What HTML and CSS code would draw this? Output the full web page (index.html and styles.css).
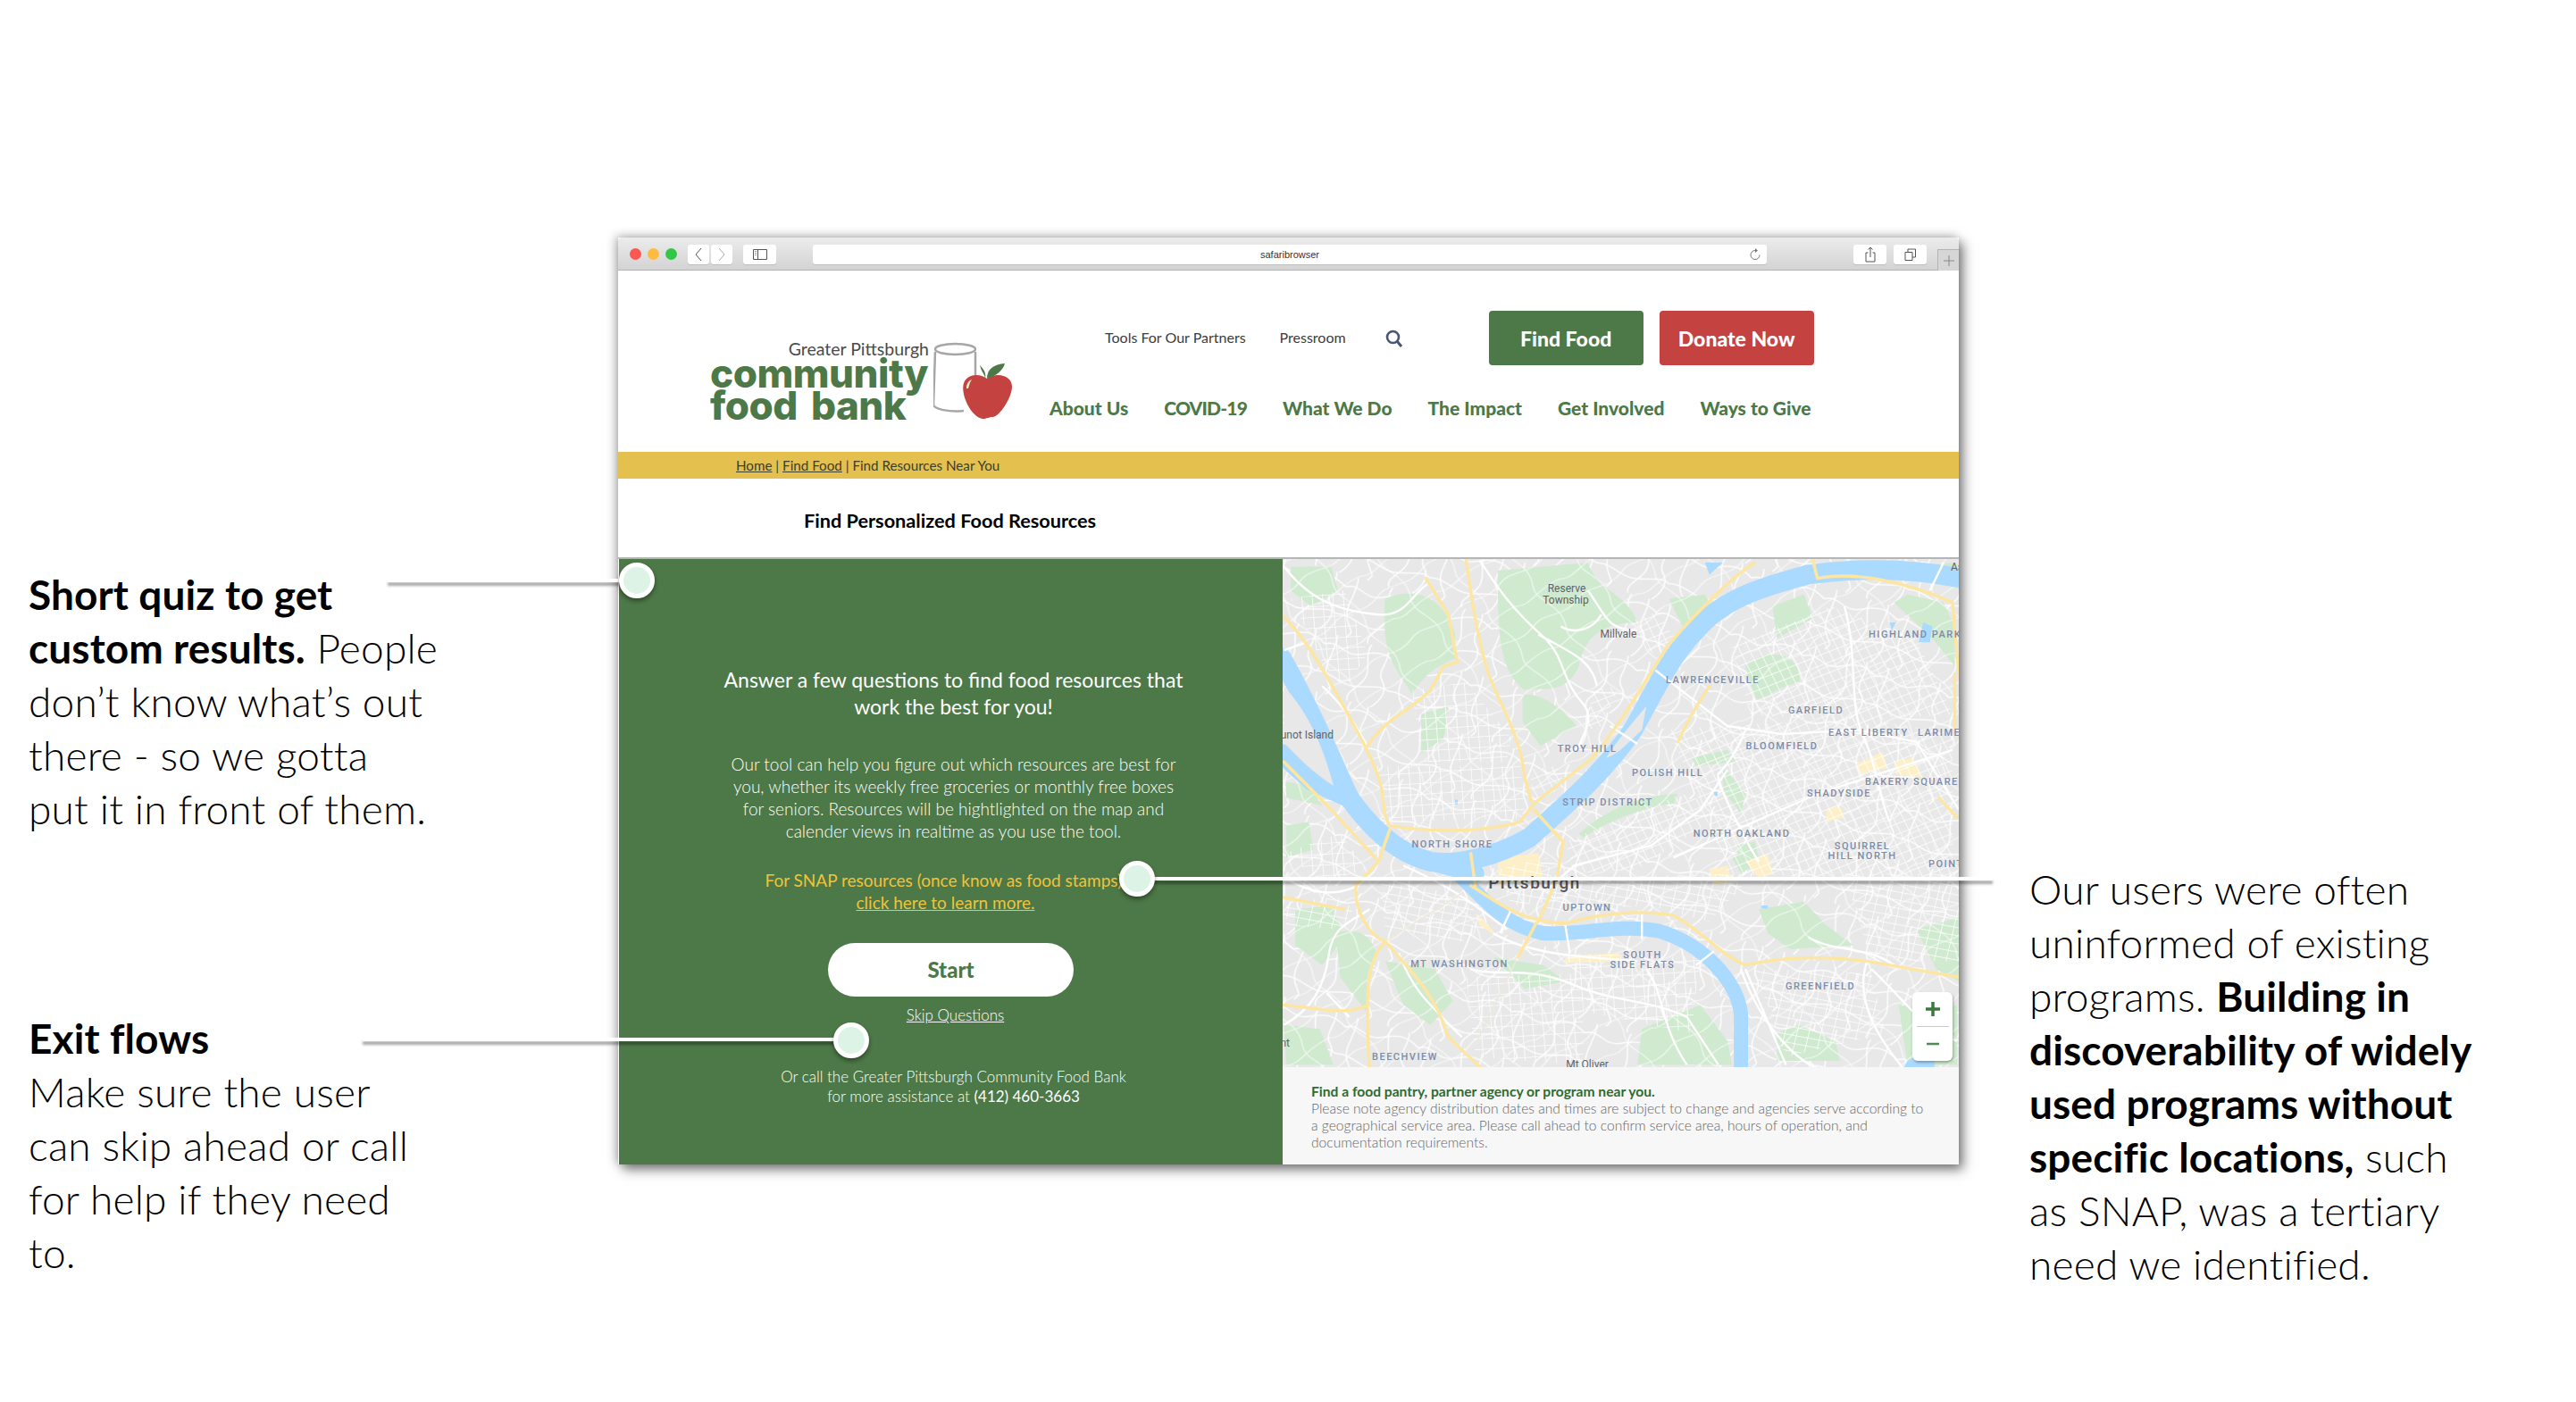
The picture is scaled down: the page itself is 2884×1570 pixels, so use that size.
FILE: index.html
```html
<!DOCTYPE html>
<html>
<head>
    <title>Find Personalized Food Resources</title>
    <link rel="stylesheet" href="styles.css">
</head>
<body>
<div class="slide">
    <div class="notes-left">
        <p class="note note-quiz"><b>Short quiz to get<br>custom results.</b> People<br>don’t know what’s out<br>there - so we gotta<br>put it in front of them.</p>
        <p class="note note-exit"><b>Exit flows</b><br>Make sure the user<br>can skip ahead or call<br>for help if they need<br>to.</p>
    </div>

    <div class="window">
        <div class="toolbar">
            <div class="lights"><i class="red"></i><i class="amber"></i><i class="green"></i></div>
            <div class="tool-btn tool-nav"><svg width="10" height="16" viewBox="0 0 10 16"><path d="M8 1 2 8l6 7" fill="none" stroke="#555" stroke-width="1"/></svg></div>
            <div class="tool-btn tool-nav"><svg width="10" height="16" viewBox="0 0 10 16"><path d="m2 1 6 7-6 7" fill="none" stroke="#aaa" stroke-width="1"/></svg></div>
            <div class="tool-btn tool-side"><svg width="16" height="12" viewBox="0 0 16 12"><path d="M.5.5h15v11H.5zM5.5.5v11" fill="none" stroke="#555"/><path d="M2 2.500h2M2 4.500h2M2 6.500h2" stroke="#999"/></svg></div>
            <div class="address">
                <span>safaribrowser</span>
                <svg class="reload" width="13" height="14" viewBox="0 0 13 14"><path d="M6 2.500a5 5 0 1 0 5 5" fill="none" stroke="#777"/><path d="M6 0v5l3-2.500z" fill="#777"/></svg>
            </div>
            <div class="tool-btn tool-act"><svg width="12" height="18" viewBox="0 0 12 18"><path d="M3.500 7H1v10h10V7H8.500M6 12V1M3.500 3.500 6 1l2.500 2.500" fill="none" stroke="#555"/></svg></div>
            <div class="tool-btn tool-act"><svg width="14" height="14" viewBox="0 0 14 14"><path d="M1 4.500h8v9H1zM4 4.500V1h8.500v9H9" fill="none" stroke="#555"/></svg></div>
            <div class="new-tab"><svg width="12" height="12" viewBox="0 0 12 12"><path d="M6 0v12M0 6h12" stroke="#888"/></svg></div>
        </div>

        <header class="site-header">
            <div class="logo">
                <div class="logo-words">
                    <div class="logo-greater">Greater Pittsburgh</div>
                    <div class="logo-name">community</div>
                    <div class="logo-name">food bank</div>
                </div>
                <svg class="logo-art" width="90" height="89" viewBox="0 0 90 89">
                    <path d="M2 11 0 70c0 5 18 9 34 7M47 11v32" fill="none" stroke="#a6a6a6" stroke-width="2.500"/>
                    <ellipse cx="24.500" cy="8" rx="22.500" ry="6" fill="#fff" stroke="#a6a6a6" stroke-width="2.500"/>
                    <path d="M60 41C52 35 38 35 34 46c-4 12 8 38 21 40 5 0 7-2 11-2 8 0 22-22 22-34C88 38 72 33 60 41z" fill="#c44240"/>
                    <path d="M37 52c0-6 3-9 6-10-2 3-3 6-4 10z" fill="#eec"/>
                    <path d="M52 26c2 8 6 11 6 15 1-5 0-9-6-15zM60 41c0-11 8-16 20-17-2 8-10 14-20 17z" fill="#4d7847"/>
                </svg>
            </div>
            <div class="header-right">
                <div class="util-row">
                    <a class="util-link">Tools For Our Partners</a>
                    <a class="util-link">Pressroom</a>
                    <svg class="search" width="20" height="20" viewBox="0 0 20 20"><circle cx="8.500" cy="8.500" r="6.500" fill="none" stroke="#4a5570" stroke-width="2.600"/><path d="m13 13 5 6" stroke="#4a5570" stroke-width="3"/></svg>
                    <a class="cta cta-green">Find Food</a>
                    <a class="cta cta-red">Donate Now</a>
                </div>
                <nav class="main-nav">
                    <a>About Us</a>
                    <a class="nav-caps">COVID-19</a>
                    <a>What We Do</a>
                    <a>The Impact</a>
                    <a>Get Involved</a>
                    <a>Ways to Give</a>
                </nav>
            </div>
        </header>

        <div class="crumbs"><a>Home</a> | <a>Find Food</a> | Find Resources Near You</div>
        <h1 class="page-title">Find Personalized Food Resources</h1>

        <div class="finder">
            <section class="quiz">
                <h2>Answer a few questions to find food resources that<br>work the best for you!</h2>
                <p class="quiz-text">Our tool can help you figure out which resources are best for<br>you, whether its weekly free groceries or monthly free boxes<br>for seniors. Resources will be hightlighted on the map and<br>calender views in realtime as you use the tool.</p>
                <p class="quiz-snap">For SNAP resources (once know as food stamps),<br><a>click here to learn more.</a></p>
                <a class="start">Start</a>
                <a class="skip">Skip Questions</a>
                <p class="quiz-call">Or call the Greater Pittsburgh Community Food Bank<br>for more assistance at <span>(412) 460-3663</span></p>
            </section>

            <section class="map-side">
                <div class="map">
                    <svg class="map-art" width="757" height="570" viewBox="12 11 1502 1277" preserveAspectRatio="none">
                        <defs>
                            <pattern id="grid-a" width="23" height="27" patternUnits="userSpaceOnUse" patternTransform="rotate(-4)"><path d="M0 0H23M0 0V27" stroke="#fff" stroke-width="3" fill="none"/></pattern>
                            <pattern id="grid-b" width="20" height="24" patternUnits="userSpaceOnUse" patternTransform="rotate(-24)"><path d="M0 0H20M0 0V24" stroke="#fff" stroke-width="3" fill="none"/></pattern>
                            <pattern id="grid-c" width="26" height="20" patternUnits="userSpaceOnUse" patternTransform="rotate(12)"><path d="M0 0H26M0 0V20" stroke="#fff" stroke-width="3" fill="none"/></pattern>
                            <pattern id="lanes" width="170" height="150" patternUnits="userSpaceOnUse" patternTransform="rotate(18)"><path d="M0 30C30 10 50 50 85 30s55-20 85 0M20 0c10 40-10 80 10 110s20 20 10 40M100 0c-10 30 20 60 10 90s-30 40-20 60M0 100c40-10 60 20 100 10s50-20 70-10M140 0c10 30-10 60 10 80s10 50-5 70" stroke="#fff" stroke-width="2.800" fill="none"/></pattern>
                            <pattern id="lanes-b" width="120" height="130" patternUnits="userSpaceOnUse" patternTransform="rotate(-35)"><path d="M0 20c30 20 60-10 120 0M60 0c-20 40 30 70 0 130M0 85c40-20 70 20 120 0" stroke="#fff" stroke-width="2.400" fill="none"/></pattern>
                        </defs>
                        <rect x="0" y="0" width="1600" height="1400" fill="#e8e8e8"/>
                        <rect x="0" y="0" width="1600" height="1400" fill="url(#lanes)"/>

                        <g fill="#cfeacf">
                            <path d="M30 30h90l15 60-60 40-45-40zM20 340l60 60 30 70-95-40z"/>
                            <path d="M240 110C300 80 370 100 395 200v60c-40 20-70 40-95 90-40-70-70-100-60-240z"/>
                            <path d="M490 40l200-20c20 70 90 80 110 150-90 0-120 50-130 110-30 80-100 50-120 60-60-50-60-150-60-300z"/>
                            <path d="M545 350c50 0 90 40 120 80l-80 50-40-60z"/>
                            <path d="M320 400l60-20-10 80-50 40zM870 110l80-10 20 40-70 40z"/>
                            <path d="M1040 280c60-60 130-20 120 40-50 10-80 50-100 40zM1100 130l70-30 20 60-80 50z"/>
                            <path d="M1370 120l30-20 80 20 25 60v100l-50-70zM1400 30l110-10v30z" />
                            <path d="M670 700c60-60 140-100 220-100l-10 25c-80 10-150 50-200 85z"/>
                            <path d="M920 510l80-20 20 30-90 10zM990 530l50 70-10 50-40-60zM1010 760l50-40 10 50-40 30z"/>
                            <path d="M20 680l50-10 10 70-60 20zM20 570l50 10 30 50-80-20zM15 1180l80 10 30 90H20z"/>
                            <path d="M40 890l80-10 30 80-50 70-60-50zM130 950c50-20 80 10 90 50-30 60-20 90-20 150l-60-90z"/>
                            <path d="M240 1020l110 20 40 80-50 60-60-50zM480 1010l110 20 50 40-90 20z"/>
                            <path d="M810 1190l130-60 60 90 10 60H800zM1110 1200l50-20 80 40 10 50h-140z"/>
                            <path d="M1070 890l100-20 50 60 60 50-140 10-50-40z"/>
                            <path d="M1420 940l94-30v160l-50-30zM1380 1130l70 10 60-10v150h-110z"/>
                            <path d="M1020 730l40-10 10 40-40 30z"/>
                        </g>

                        <rect x="0" y="0" width="1600" height="1400" fill="url(#lanes-b)" opacity="0.7"/>

                        <g fill="#fdf0c8">
                            <path d="M490 760l90-10 10 60-100 20zM1040 770l50-20 10 50-30 10zM960 790l40-10 10 40-40 10z"/>
                            <path d="M1285 525l60-30 10 40-60 15zM1370 520l40-10 25 50-60-10zM1220 640l30-10 10 30-40 10zM640 1005l120-5v20l-120 5zM440 900l30 30 20 30-40-30z"/>
                        </g>

                        <!-- rivers -->
                        <g fill="none" stroke="#aadaff" stroke-linecap="round" stroke-linejoin="round">
                            <path d="M1530 62C1400 30 1280 35 1180 50 1080 80 990 110 930 190 870 260 840 340 790 440 730 540 650 620 560 710 480 760 400 780 340 770 270 750 210 690 160 610 130 540 90 420 10 260" stroke-width="22" vector-effect="non-scaling-stroke"/>
                            <path d="M10 500 80 570 160 610" stroke-width="22" vector-effect="non-scaling-stroke"/>
                            <path d="M410 810C470 880 510 930 590 950 680 955 760 925 850 945 950 980 1020 1070 1030 1150L1030 1300" stroke-width="16" vector-effect="non-scaling-stroke"/>
                            <path d="M340 770 440 800" stroke-width="20" vector-effect="non-scaling-stroke"/>
                        </g>
                        <path d="M730 510c30-50 60-90 90-130l-10 60c-30 30-50 60-80 70z" fill="#e8e8e8"/>
                        <path d="M15 330c40 50 80 120 110 250-40-30-80-70-110-110z" fill="#e8e8e8"/>
                        <path d="M950 20h40l-30 30zM1400 1270l60-40v60h-70z" fill="#aadaff"/>
                        <path d="M1435 170l20 10-5 40h-25zM1360 170h15l-10 20zM970 595h8v10h-8zM1075 880h15v8h-15zM395 615h6v12h-6z" fill="#aadaff"/>

                        <!-- street grids -->
                        <g>
                            <path fill="url(#grid-a)" d="M215 530h325l10 130-300 10zM30 110l120-20 50 160-50 90-50-70zM300 340l120-20 100 140-10 60H320z"/>
                            <path fill="url(#grid-a)" d="M15 750l125-50 60 90-100 30zM420 1060l260-10v230l-240-20zM640 1000l300 10-20 190-220-50z"/>
                            <path fill="url(#grid-b)" d="M640 720l260-120 100 40-200 150-140 10zM1000 430l300-20 200 40v370l-500-20-50-150-80-210zM780 170l70-30 30 70-50 40z"/>
                            <path fill="url(#grid-b)" d="M1010 230l220-100 190 80 80 190-250 20-200-20zM700 340l60-10-40 100-30 10zM560 540l60-10 20 50-70 40z"/>
                            <path fill="url(#grid-c)" d="M600 810l460-10-100 120-140-40-220 20zM1060 1040l260 10 30 150-220 60zM1260 800h254v220h-194zM490 790l110-30 20 110-100 10z"/>
                            <path fill="url(#grid-c)" d="M20 870l120-10 30 30-30 50-120-10zM230 820l170 30 70 80-60 40-170-30z"/>
                        </g>

                        <!-- main roads -->
                        <g fill="none" stroke="#fff" stroke-width="2.400" stroke-linejoin="round">
                            <path vector-effect="non-scaling-stroke" d="M15 30C70 110 130 140 220 150c70 10 80-60 120-80M15 240l50-20M100 330c60 60 90 130 100 150"/>
                            <path vector-effect="non-scaling-stroke" d="M450 15c30 50 60 110 140 190 50 50 40 110 90 170 30 40-10 90-10 110M580 200c60 40 120 60 130 130M720 150c-20 40-60 50-90 30M690 90c40 60 40 100 110 100"/>
                            <path vector-effect="non-scaling-stroke" d="M840 290l160 140 120 20 170-10 130 30 94 170M1000 540l-60 100-110 90-170 50-60 60"/>
                            <path vector-effect="non-scaling-stroke" d="M740 430l60 45M1450 90l30-70M970 995l-40 35M810 900v65M640 930l10 70M520 890l-25 60M1030 1040c50 160 140 240 170 248M1310 1020c-30 100 30 200 80 268"/>
                            <path vector-effect="non-scaling-stroke" d="M880 760l320-160 300-110M1040 440c-20 60-50 100-60 110s60 170 90 220M1260 130c30 120 10 250 40 320s40 170 60 220"/>
                            <path vector-effect="non-scaling-stroke" d="M15 1180c60-40 90-90 100-180 10-70 50-80 90-110M110 1100l50 60M430 1040c60 20 130-10 230 40 80 40 180 40 250 80l70 120M270 1000c30 90 60 120 140 210M480 950c90 60 230 60 320 70M1040 1040l90 240M1180 960c60 40 130 20 190 70"/>
                            <path vector-effect="non-scaling-stroke" d="M280 780c100 50 150 90 230 160M15 810c60 40 110 50 165 20M1320 1040c60 60 120 160 190 180M820 1040c40 60 30 140 90 240"/>
                        </g>

                        <!-- highways -->
                        <g fill="none" stroke="#fde6a2" stroke-width="3.500" stroke-linejoin="round" stroke-linecap="round">
                            <path vector-effect="non-scaling-stroke" d="M420 15c10 85 25 205 50 285s70 150 80 260l15 60"/>
                            <path vector-effect="non-scaling-stroke" d="M15 155c55 65 105 165 175 315s30 150 60 210c80 15 200 20 290-10l30-45"/>
                            <path vector-effect="non-scaling-stroke" d="M570 625l130-115c80-110 130-220 170-285 80-105 150-175 190-205"/>
                            <path vector-effect="non-scaling-stroke" d="M1190 15l10 45c80-20 200 10 300 60l14 180M1505 300v140M1470 610l40 50"/>
                            <path vector-effect="non-scaling-stroke" d="M570 640l65 80-15 100-40 100"/>
                            <path vector-effect="non-scaling-stroke" d="M430 830c70 50 110 90 210 95 80-25 160-35 240-20 70 45 100 95 160 125 80-20 160-25 270-10l204 40"/>
                            <path vector-effect="non-scaling-stroke" d="M250 690l-25 80-50 60c-5 70 35 130 65 140-30 40-50 80-35 318"/>
                            <path vector-effect="non-scaling-stroke" d="M200 480c50-80 100-90 140-140l30-60 30-10-20-120-50-90"/>
                            <path vector-effect="non-scaling-stroke" d="M240 970c60 80 110 130 140 240l70 75M15 1130c65 5 135 30 185 0M15 860l135 30M15 520l105 120 105 130"/>
                            <path vector-effect="non-scaling-stroke" d="M430 750l10 80M575 925l-40 85M890 470c20-50 40-90 70-140"/>
                        </g>
                        <path vector-effect="non-scaling-stroke" d="M240 970 410 850M440 1230l90-210" fill="none" stroke="#eee9dc" stroke-width="1.500"/>
                    </svg>

                    <svg class="map-labels" width="757" height="570" viewBox="0 0 757 570">
                        <text class="place" x="318" y="37" text-anchor="middle">Reserve</text>
                        <text class="place" x="317" y="50" text-anchor="middle">Township</text>
                        <text class="place" x="376" y="88" text-anchor="middle">Millvale</text>
                        <text class="place" x="57" y="201" text-anchor="end">Brunot Island</text>
                        <text class="place" x="8" y="546" text-anchor="end">Dormont</text>
                        <text class="place" x="341" y="570" text-anchor="middle">Mt Oliver</text>
                        <text class="place" x="748" y="13">Aspinwall</text>
                        <text class="hood" x="656" y="88">HIGHLAND PARK</text>
                        <text class="hood" x="429" y="139">LAWRENCEVILLE</text>
                        <text class="hood" x="597" y="173" text-anchor="middle">GARFIELD</text>
                        <text class="hood" x="611" y="198">EAST LIBERTY</text>
                        <text class="hood" x="711" y="198">LARIMER</text>
                        <text class="hood" x="559" y="213" text-anchor="middle">BLOOMFIELD</text>
                        <text class="hood" x="341" y="216" text-anchor="middle">TROY HILL</text>
                        <text class="hood" x="431" y="243" text-anchor="middle">POLISH HILL</text>
                        <text class="hood" x="652" y="253">BAKERY SQUARE</text>
                        <text class="hood" x="623" y="266" text-anchor="middle">SHADYSIDE</text>
                        <text class="hood" x="364" y="276" text-anchor="middle">STRIP DISTRICT</text>
                        <text class="hood" x="514" y="311" text-anchor="middle">NORTH OAKLAND</text>
                        <text class="hood" x="649" y="325" text-anchor="middle">SQUIRREL</text>
                        <text class="hood" x="649" y="336" text-anchor="middle">HILL NORTH</text>
                        <text class="hood" x="723" y="345">POINT</text>
                        <text class="hood" x="190" y="323" text-anchor="middle">NORTH SHORE</text>
                        <text class="city" x="282" y="369" text-anchor="middle">Pittsburgh</text>
                        <text class="hood" x="341" y="394" text-anchor="middle">UPTOWN</text>
                        <text class="hood" x="198" y="457" text-anchor="middle">MT WASHINGTON</text>
                        <text class="hood" x="403" y="447" text-anchor="middle">SOUTH</text>
                        <text class="hood" x="403" y="458" text-anchor="middle">SIDE FLATS</text>
                        <text class="hood" x="602" y="482" text-anchor="middle">GREENFIELD</text>
                        <text class="hood" x="137" y="561" text-anchor="middle">BEECHVIEW</text>
                    </svg>

                    <div class="zoom-ctl">
                        <svg width="18" height="18" viewBox="0 0 18 18"><path d="M9 1v16M1 9h16" stroke="#3b7a3f" stroke-width="3.500"/></svg>
                        <i></i>
                        <svg width="18" height="18" viewBox="0 0 18 18"><path d="M2 9h14" stroke="#4d8a55" stroke-width="2.500"/></svg>
                    </div>
                </div>
                <div class="map-note">
                    <b>Find a food pantry, partner agency or program near you.</b><br>
                    Please note agency distribution dates and times are subject to change and agencies serve according to<br>
                    a geographical service area. Please call ahead to confirm service area, hours of operation, and<br>
                    documentation requirements.
                </div>
            </section>
        </div>
    </div>

    <div class="notes-right">
        <p class="note">Our users were often<br>uninformed of existing<br>programs. <b>Building in<br>discoverability of widely<br>used programs without<br>specific locations,</b> such<br>as SNAP, was a tertiary<br>need we identified.</p>
    </div>

    <!-- callouts -->
    <div class="leader leader-quiz"></div>
    <div class="leader leader-snap"></div>
    <div class="leader leader-exit"></div>
    <div class="dot dot-quiz"></div>
    <div class="dot dot-snap"></div>
    <div class="dot dot-exit"></div>
</div>
</body>
</html>
```

FILE: styles.css
```css
* {
    box-sizing: border-box;
}
body {
    margin: 0;
    background-color: #fff;
    font-family: Lato, "Open Sans", sans-serif;
    color: #000;
}
.slide {
    position: relative;
    display: grid;
    grid-template-columns: 692px 1501px 1fr;
    width: 2884px;
    height: 1570px;
    padding-top: 266px;
    overflow: hidden;
}

/* side notes */
.note {
    margin: 0;
    font-size: 46px;
    line-height: 60px;
    font-weight: 300;
    letter-spacing: 0.2px;
    white-space: nowrap;
}
.note b {
    font-weight: 700;
    letter-spacing: 0.1px;
}
.notes-left {
    padding-left: 32px;
}
.note-quiz {
    margin-top: 370px;
}
.note-exit {
    margin-top: 197px;
}
.notes-right {
    padding-left: 79px;
    padding-top: 700px;
}

/* browser window */
.window {
    display: flex;
    flex-direction: column;
    height: 1038px;
    background-color: #fff;
    box-shadow: 5px 6px 12px rgba(0, 0, 0, 0.5), -3px -2px 10px rgba(0, 0, 0, 0.25);
}
.toolbar {
    display: flex;
    align-items: flex-start;
    position: relative;
    height: 37px;
    padding: 8px 0 0 13px;
    background: linear-gradient(#ececec, #d3d3d3);
    border-bottom: 1px solid #b4b4b4;
    border-radius: 4px 4px 0 0;
}
.lights {
    display: flex;
    gap: 7px;
    margin-top: 4px;
    margin-right: 12px;
}
.lights i {
    width: 13px;
    height: 13px;
    border-radius: 50%;
}
.lights .red {
    background-color: #fc5753;
}
.lights .amber {
    background-color: #fdbc40;
}
.lights .green {
    background-color: #33c748;
}
.tool-btn {
    display: flex;
    align-items: center;
    justify-content: center;
    height: 22px;
    background-color: #fff;
    border-radius: 3px;
    box-shadow: 0 1px 0 #bdbdbd;
}
.tool-nav {
    width: 24px;
    margin-right: 2px;
}
.tool-side {
    width: 37px;
    margin-left: 10px;
}
.tool-act {
    width: 37px;
    margin-right: 8px;
}
.address {
    display: flex;
    align-items: center;
    justify-content: center;
    position: relative;
    width: 1068px;
    height: 22px;
    margin-left: 41px;
    margin-right: 97px;
    background-color: #fff;
    border-radius: 3px;
    box-shadow: 0 1px 0 #bdbdbd;
    font-family: "Liberation Sans", sans-serif;
    font-size: 11px;
    color: #333;
}
.reload {
    position: absolute;
    right: 6px;
    top: 4px;
}
.new-tab {
    display: flex;
    align-items: center;
    justify-content: center;
    position: absolute;
    right: 0;
    top: 13px;
    width: 24px;
    height: 24px;
    background-color: #d6d6d6;
    border: 1px solid #b4b4b4;
    border-right: none;
    border-bottom: none;
}

/* site header */
.site-header {
    display: flex;
    height: 203px;
}
.logo {
    display: flex;
    align-items: flex-start;
    width: 483px;
    padding-left: 103px;
    padding-top: 79px;
}
.logo-words {
    width: 250px;
    color: #4d7847;
}
.logo-greater {
    height: 18px;
    padding-right: 5px;
    font-size: 19.500px;
    line-height: 18px;
    text-align: right;
    color: #4a4a4a;
}
.logo-name {
    height: 36px;
    font-family: Inter, sans-serif;
    font-size: 44px;
    line-height: 36px;
    font-weight: 800;
    letter-spacing: -0.5px;
    word-spacing: 6px;
}
.logo-art {
    flex: none;
    margin-top: 1px;
}
.header-right {
    flex: 1;
    padding-top: 45px;
}
.util-row {
    display: flex;
    align-items: center;
    padding-left: 62px;
    height: 61px;
}
.util-link {
    margin-right: 38px;
    margin-top: -2px;
    font-size: 16px;
    color: #3c3c3c;
}
.search {
    margin-left: 6px;
    margin-right: 96px;
}
.cta {
    display: flex;
    align-items: center;
    justify-content: center;
    width: 173px;
    height: 61px;
    margin-right: 18px;
    border-radius: 4px;
    color: #fff;
    font-size: 23px;
    font-weight: 900;
}
.cta-green {
    background-color: #4d7847;
}
.cta-red {
    background-color: #c44240;
}
.main-nav {
    display: flex;
    gap: 40px;
    margin-top: 36px;
    font-size: 21px;
    line-height: 24px;
    font-weight: 900;
    color: #4d7847;
}
.nav-caps {
    letter-spacing: -0.8px;
}

.crumbs {
    height: 30px;
    padding-left: 132px;
    background-color: #e4c14f;
    font-size: 15.200px;
    line-height: 30px;
    color: #3d3d2a;
}
.crumbs a {
    text-decoration: underline;
}
.page-title {
    height: 90px;
    margin: 0;
    padding-left: 208px;
    border-bottom: 2px solid #b5b5b5;
    font-size: 21.700px;
    line-height: 94px;
    font-weight: 700;
}

.finder {
    display: flex;
    flex: 1;
}

/* quiz panel */
.quiz {
    display: flex;
    flex-direction: column;
    align-items: center;
    width: 744px;
    padding-top: 120px;
    padding-left: 6px;
    background-color: #4d7847;
    border-left: 1px solid #fff;
    color: #fff;
    text-align: center;
}
.quiz h2 {
    margin: 0;
    font-size: 23px;
    line-height: 30px;
    font-weight: 400;
}
.quiz-text {
    margin: 37px 0 0;
    font-size: 19px;
    line-height: 25px;
    font-weight: 300;
}
.quiz-snap {
    margin: 30px 18px 0 0;
    font-size: 19px;
    line-height: 25px;
    color: #f0c33c;
}
.quiz-snap a {
    text-decoration: underline;
}
.start {
    width: 275px;
    height: 60px;
    margin-top: 33px;
    margin-right: 6px;
    background-color: #fff;
    border-radius: 30px;
    color: #4d7847;
    font-size: 24px;
    line-height: 60px;
    font-weight: 900;
}
.skip {
    margin-top: 11px;
    margin-left: 4px;
    font-size: 17px;
    line-height: 20px;
    font-weight: 300;
    text-decoration: underline;
}
.quiz-call {
    margin: 48px 0 0;
    font-size: 17px;
    line-height: 22px;
    font-weight: 300;
}
.quiz-call span {
    font-weight: 400;
}

/* map */
.map-side {
    display: flex;
    flex-direction: column;
    width: 757px;
}
.map {
    position: relative;
    height: 569px;
    overflow: hidden;
}
.map-art, .map-labels {
    position: absolute;
    left: 0;
    top: 0;
}
.place {
    font-family: Roboto, sans-serif;
    font-size: 12px;
    fill: #5f6368;
}
.hood {
    font-family: Roboto, sans-serif;
    font-size: 11px;
    font-weight: 500;
    letter-spacing: 1.500px;
    fill: #7d8ba6;
}
.city {
    font-family: Roboto, sans-serif;
    font-size: 19px;
    font-weight: 500;
    letter-spacing: 1.500px;
    fill: #55585c;
}
.zoom-ctl {
    display: flex;
    flex-direction: column;
    align-items: center;
    justify-content: space-between;
    position: absolute;
    right: 7px;
    top: 485px;
    width: 45px;
    height: 77px;
    padding: 10px 0;
    background-color: #fff;
    border-radius: 6px;
    box-shadow: 1px 2px 3px rgba(0, 0, 0, 0.3);
}
.zoom-ctl i {
    width: 36px;
    height: 1px;
    background-color: #ccc;
}
.map-note {
    flex: 1;
    padding: 18px 10px 0 32px;
    background-color: #f7f7f7;
    font-size: 15.600px;
    line-height: 19px;
    font-weight: 300;
    color: #666;
    white-space: nowrap;
}
.map-note b {
    color: #2f6b2f;
    font-weight: 700;
}

/* callouts over the screenshot */
.leader {
    position: absolute;
    height: 4px;
    background-color: #fff;
    box-shadow: 0 4px 3px rgba(0, 0, 0, 0.35);
}
.leader-quiz {
    left: 434px;
    top: 648px;
    width: 279px;
}
.leader-snap {
    left: 1273px;
    top: 982px;
    width: 958px;
}
.leader-exit {
    left: 406px;
    top: 1162px;
    width: 547px;
}
.dot {
    position: absolute;
    width: 40px;
    height: 40px;
    background-color: #dcf3e6;
    border: 5px solid #fff;
    border-radius: 50%;
    box-shadow: 0 3px 5px rgba(0, 0, 0, 0.4);
}
.dot-quiz {
    left: 693px;
    top: 630px;
}
.dot-snap {
    left: 1253px;
    top: 964px;
}
.dot-exit {
    left: 933px;
    top: 1145px;
}
```
